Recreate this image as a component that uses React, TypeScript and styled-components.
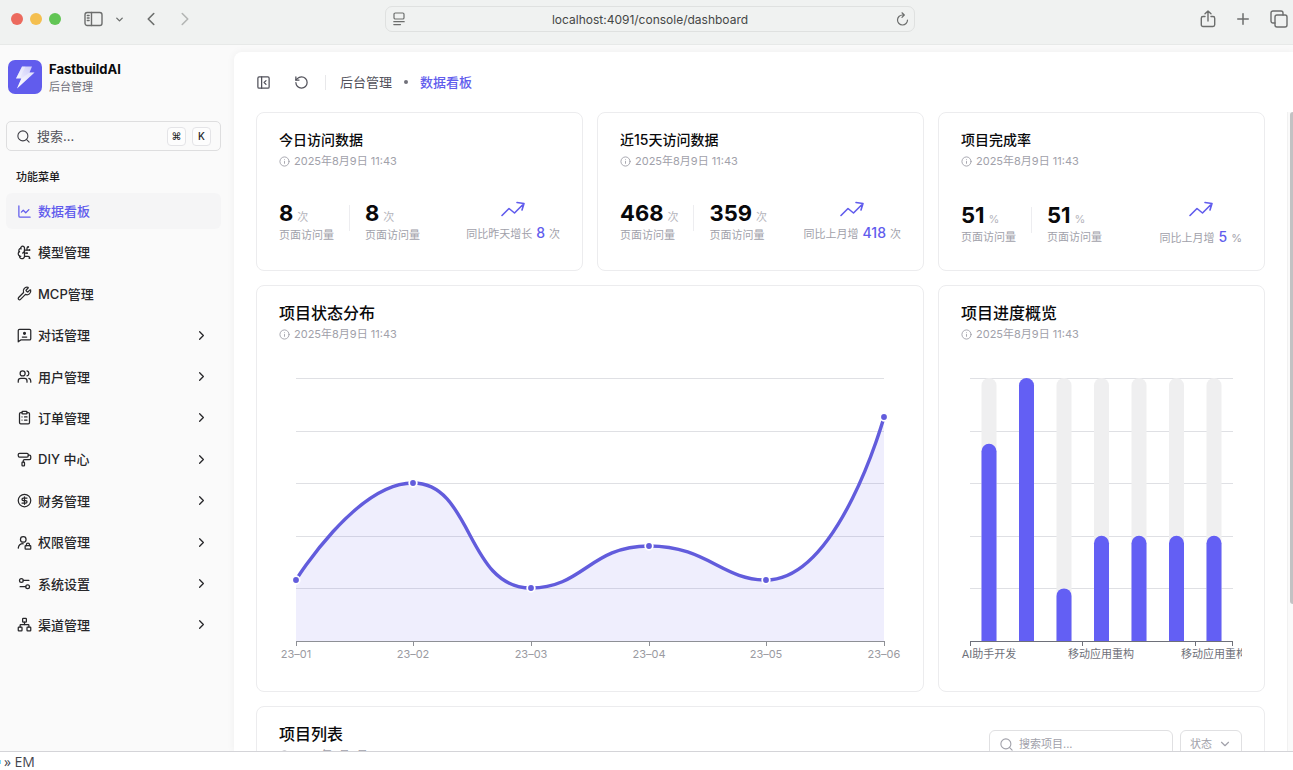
import React from "react";
import styled, { createGlobalStyle } from "styled-components";
import {
  BrainCircuit,
  ChartLine,
  ChevronDown,
  ChevronLeft,
  ChevronRight,
  CircleDollarSign,
  ClipboardList,
  Info,
  Network,
  PaintRoller,
  PanelLeftClose,
  Plus,
  RotateCcw,
  Search,
  Settings2,
  Users,
  Wrench,
} from "lucide-react";

const accent = "#615ced";
const border = "#ececee";

const GlobalStyle = createGlobalStyle`
  * { box-sizing: border-box; }
  body {
    margin: 0;
    background: #fff;
    color: #18181b;
    font-family: Inter, "Noto Sans CJK SC", sans-serif;
  }
  h1, h2, h3, p, ul, dl, dd { margin: 0; padding: 0; }
  ul { list-style: none; }
  button, input, select { font: inherit; color: inherit; }
  a { color: inherit; text-decoration: none; }
  svg { display: block; flex-shrink: 0; }
`;

const Screen = styled.div`
  display: flex;
  flex-direction: column;
  height: 100vh;
  overflow: hidden;
`;

/* ---------- browser bar ---------- */

const BrowserBar = styled.header`
  display: flex;
  align-items: center;
  flex-shrink: 0;
  height: 45px;
  padding: 0 5px 6px 11px;
  background: #f0f2f1;
  border-bottom: 1px solid #e7e9e8;
  color: #6c6e6d;
`;

const BarSide = styled.div<{ $end?: boolean }>`
  display: flex;
  flex: 1;
  align-items: center;
  justify-content: ${(p) => (p.$end ? "flex-end" : "flex-start")};
  gap: ${(p) => (p.$end ? "18px" : "11px")};
`;

const Lights = styled.div`
  display: flex;
  gap: 7px;
  margin-right: 12px;
`;

const Light = styled.span<{ $color: string }>`
  width: 12px;
  height: 12px;
  border-radius: 50%;
  background: ${(p) => p.$color};
`;

const IconButton = styled.button<{ $faded?: boolean }>`
  display: inline-flex;
  padding: 0;
  border: 0;
  background: none;
  color: ${(p) => (p.$faded ? "#b4b6b5" : "inherit")};
`;

const NavButtons = styled.div`
  display: flex;
  gap: 12px;
  margin-left: 4px;
`;

const Address = styled.div`
  display: flex;
  align-items: center;
  width: 530px;
  max-width: 50%;
  height: 26px;
  padding: 0 5px 0 7px;
  border: 1px solid #dfe1e0;
  border-radius: 7px;
`;

const AddressInput = styled.input`
  flex: 1;
  min-width: 0;
  border: 0;
  padding: 0;
  background: none;
  color: #454746;
  font-size: 12px;
  text-align: center;
  outline: none;
`;

/* ---------- shell ---------- */

const Shell = styled.div`
  display: flex;
  flex: 1;
  min-height: 0;
  background: #fafafa;
`;

const Sidebar = styled.aside`
  width: 234px;
  flex-shrink: 0;
  padding: 15px 13px 0 6px;
`;

const Brand = styled.div`
  display: flex;
  gap: 7px;
  padding-left: 2px;
`;

const BrandName = styled.h1`
  font-size: 13px;
  line-height: 18px;
  font-weight: 700;
  color: #09090b;
`;

const BrandSub = styled.p`
  font-size: 11px;
  line-height: 18px;
  color: #71717a;
`;

const SearchBox = styled.label`
  display: flex;
  align-items: center;
  gap: 6px;
  height: 30px;
  margin-top: 25px;
  padding: 0 9px;
  border: 1px solid #dededf;
  border-radius: 5px;
  color: #3f3f46;
`;

const SearchInput = styled.input`
  flex: 1;
  min-width: 0;
  border: 0;
  padding: 0;
  background: none;
  font-size: 13px;
  outline: none;
  &::placeholder { color: #52525b; opacity: 1; }
`;

const Kbd = styled.kbd`
  display: grid;
  place-items: center;
  width: 19px;
  height: 19px;
  border: 1px solid #e4e4e7;
  border-radius: 4px;
  background: #fdfdfd;
  color: #27272a;
  font-family: inherit;
  font-size: 10px;
  font-weight: 500;
`;

const MenuTitle = styled.h2`
  margin: 18px 0 8px;
  padding-left: 10px;
  font-size: 11px;
  line-height: 16px;
  font-weight: 500;
`;

const Menu = styled.ul`
  display: flex;
  flex-direction: column;
  justify-content: space-between;
  height: 450px;
`;

const MenuLink = styled.a<{ $active?: boolean }>`
  display: flex;
  align-items: center;
  gap: 6px;
  height: 36px;
  padding: 0 12px 0 11px;
  border-radius: 6px;
  background: ${(p) => (p.$active ? "#f5f5f6" : "transparent")};
  color: ${(p) => (p.$active ? accent : "#27272a")};
  font-size: 13px;
  line-height: 18px;
  font-weight: 500;
  & > span { flex: 1; }
`;

/* ---------- main panel ---------- */

const Main = styled.main`
  display: flex;
  flex-direction: column;
  flex: 1;
  min-width: 0;
  margin-top: 7px;
  border-radius: 8px 0 0 0;
  background: #fff;
  box-shadow: 0 0 8px rgba(0, 0, 0, 0.05);
`;

const TopBar = styled.div`
  display: flex;
  align-items: center;
  height: 60px;
  flex-shrink: 0;
  padding-left: 22px;
  color: #52525b;
`;

const TopTools = styled.div`
  display: flex;
  gap: 23px;
  padding-right: 16px;
  margin-right: 14px;
  border-right: 1px solid #e8e8ea;
`;

const Crumbs = styled.nav`
  display: flex;
  align-items: center;
  gap: 12px;
  font-size: 13px;
  line-height: 18px;
`;

const CrumbDot = styled.span`
  width: 4px;
  height: 4px;
  border-radius: 50%;
  background: #71717a;
`;

const CrumbCurrent = styled.a`
  color: ${accent};
  font-weight: 500;
`;

const Body = styled.div`
  display: flex;
  flex: 1;
  min-height: 0;
`;

const Cards = styled.div`
  display: grid;
  flex: 1;
  min-width: 0;
  grid-template-columns: repeat(3, minmax(0, 1fr));
  align-content: start;
  gap: 14px;
  padding: 0 22px;
  overflow: hidden;
`;

const ScrollTrack = styled.div`
  display: flex;
  flex-direction: column;
  align-items: flex-end;
  width: 6px;
  border-left: 1px solid #f1f1f1;
  background: #fafafa;
`;

const ScrollThumb = styled.div`
  width: 3px;
  height: 77%;
  border-radius: 3px 0 0 3px;
  background: #c2c2c3;
`;

const Card = styled.section<{ $span?: number }>`
  grid-column: span ${(p) => p.$span || 1};
  min-width: 0;
  padding: 17px 22px 22px;
  border: 1px solid ${border};
  border-radius: 8px;
  background: #fff;
`;

const ChartPanel = styled(Card)`
  padding: 15px 22px 23px;
`;

const StatTitle = styled.h3`
  margin-bottom: 3px;
  font-size: 14px;
  line-height: 20px;
  font-weight: 500;
  color: #09090b;
`;

const SectionTitle = styled.h3`
  margin-bottom: 1px;
  font-size: 16px;
  line-height: 24px;
  font-weight: 500;
  color: #09090b;
`;

const DateLine = styled.p`
  display: flex;
  align-items: center;
  gap: 4px;
  font-size: 11px;
  line-height: 16px;
  color: #a1a1aa;
`;

const StatRow = styled.div`
  display: flex;
  justify-content: space-between;
  margin-top: 31px;
`;

const StatGroup = styled.dl<{ $low?: boolean }>`
  display: flex;
  padding-top: ${(p) => (p.$low ? "2px" : "0")};
`;

const Stat = styled.div`
  display: flex;
  flex-direction: column-reverse;
  justify-content: flex-end;
`;

const StatDivider = styled.span`
  width: 1px;
  height: 26px;
  margin: 5px 15px 0;
  background: #ededf0;
`;

const StatLabel = styled.dt`
  font-size: 11px;
  line-height: 18px;
  color: #a1a1aa;
`;

const StatValue = styled.dd`
  font-size: 22px;
  line-height: 26px;
  font-weight: 700;
  color: #09090b;
`;

const Unit = styled.small`
  margin-left: 4px;
  font-size: 11px;
  line-height: 1;
  font-weight: 400;
  color: #b4b4bb;
`;

const Trend = styled.div<{ $low?: boolean }>`
  display: flex;
  flex-direction: column;
  align-items: center;
  gap: ${(p) => (p.$low ? "10px" : "6px")};
  color: ${accent};
`;

const TrendText = styled.p`
  font-size: 11px;
  line-height: 20px;
  color: #a1a1aa;
`;

const TrendValue = styled.strong`
  margin: 0 4px;
  font-size: 14px;
  line-height: 1;
  font-weight: 500;
  color: ${accent};
`;

const Chart = styled.svg`
  width: 100%;
  height: auto;
  overflow: hidden;
  font-size: 11px;
`;

const ListHead = styled.div`
  display: flex;
  justify-content: space-between;
`;

const Filters = styled.div`
  display: flex;
  gap: 7px;
  padding-top: 8px;
  color: #a1a1aa;
`;

const FilterBox = styled.label<{ $wide?: boolean }>`
  display: flex;
  align-items: center;
  gap: 5px;
  width: ${(p) => (p.$wide ? "184px" : "62px")};
  height: 28px;
  padding: 0 9px;
  border: 1px solid #e0e0e2;
  border-radius: 6px;
`;

const FilterInput = styled.input`
  width: 100%;
  border: 0;
  padding: 0;
  background: none;
  font-size: 11px;
  outline: none;
  &::placeholder { color: #a1a1aa; opacity: 1; }
`;

const FilterSelect = styled.select`
  flex: 1;
  min-width: 0;
  appearance: none;
  border: 0;
  padding: 0;
  background: none;
  font-size: 11px;
  outline: none;
`;

const StatusStrip = styled.footer`
  display: flex;
  align-items: center;
  flex-shrink: 0;
  height: 19px;
  padding-top: 2px;
  border-top: 1px solid #d4d4d8;
  background: #fff;
  color: #45454d;
  font-family: "Open Sans", "Noto Sans", sans-serif;
  font-size: 14px;
  line-height: 16px;
  &::before {
    content: "";
    width: 1px;
    height: 4px;
    margin-right: 3px;
    background: #7fdcff;
  }
`;

/* ---------- drawings ---------- */

const stroke = {
  fill: "none",
  stroke: "currentColor",
  strokeLinecap: "round" as const,
  strokeLinejoin: "round" as const,
};

const Logo = () => (
  <svg width="34" height="34" viewBox="0 0 34 34" aria-hidden="true">
    <defs>
      <linearGradient id="bolt" x1="0" y1="1" x2="1" y2="0">
        <stop offset="0" stopColor="#fff" />
        <stop offset="1" stopColor="#fff" stopOpacity="0.65" />
      </linearGradient>
    </defs>
    <rect width="34" height="34" rx="7" fill="#615ced" />
    <path d="M14 6.5h10l-2.5 6h5L9 28.5l4.300-10H8z" fill="url(#bolt)" />
    <path d="M14 6.500h3.500L12.500 17l-4.500 1.500z" fill="#fff" opacity="0.3" />
    <path d="M21.500 12.500h5L9 28.500l4.300-10z" fill="#fff" opacity="0.350" />
  </svg>
);

const SidebarIcon = () => (
  <svg width="19" height="16" viewBox="0 0 19 16" {...stroke} strokeWidth="1.4" aria-hidden="true">
    <rect x="1" y="1.500" width="17" height="13" rx="2.200" />
    <path d="M7.500 1.500v13M3.300 4.500h1.800M3.300 7h1.800M3.300 9.500h1.800" />
  </svg>
);

const ReaderIcon = () => (
  <svg width="12" height="14" viewBox="0 0 12 14" {...stroke} strokeWidth="1.200" aria-hidden="true">
    <rect x="1" y="1" width="10" height="6" rx="1.300" />
    <path d="M0.800 9.700h10.400M0.800 12.600h6.700" />
  </svg>
);

const ReloadIcon = () => (
  <svg width="13" height="14" viewBox="0 0 13 14" {...stroke} strokeWidth="1.200" aria-hidden="true">
    <path d="M11.500 8a5 5 0 1 1-5-5h1.500M6 0.800 8.300 3 6 5.300" />
  </svg>
);

const ShareIcon = () => (
  <svg width="16" height="18" viewBox="0 0 16 18" {...stroke} strokeWidth="1.400" aria-hidden="true">
    <path d="M5 6.500H3A1.700 1.700 0 0 0 1.300 8.200v6.600A1.700 1.700 0 0 0 3 16.500h10a1.700 1.700 0 0 0 1.700-1.700V8.200A1.700 1.700 0 0 0 13 6.500h-2M8 11V1M5 3.800 8 1l3 2.800" />
  </svg>
);

const TabsIcon = () => (
  <svg width="18" height="18" viewBox="0 0 18 18" {...stroke} strokeWidth="1.400" aria-hidden="true">
    <rect x="5" y="5" width="12" height="12" rx="2" />
    <path d="M5 13H3a2 2 0 0 1-2-2V3a2 2 0 0 1 2-2h8a2 2 0 0 1 2 2v2" />
  </svg>
);

const ChatUserIcon = ({ size = 14 }: { size?: number }) => (
  <svg width={size} height={size} viewBox="0 0 24 24" {...stroke} strokeWidth="2" aria-hidden="true">
    <path d="M22 17a2 2 0 0 1-2 2H6l-4 3V4a2 2 0 0 1 2-2h16a2 2 0 0 1 2 2z" />
    <circle cx="12" cy="8.500" r="1.500" fill="currentColor" />
    <path d="M8.500 14.500h7" />
  </svg>
);

const UserLockIcon = ({ size = 14 }: { size?: number }) => (
  <svg width={size} height={size} viewBox="0 0 24 24" {...stroke} strokeWidth="2" aria-hidden="true">
    <circle cx="10" cy="7" r="4.500" />
    <path d="M2 21a8 8 0 0 1 8-7" />
    <rect x="13" y="17" width="9" height="5.500" rx="1" />
    <path d="M15 17v-1.500a2.500 2.500 0 0 1 5 0V17" />
  </svg>
);

const TrendIcon = () => (
  <svg width="24" height="18" viewBox="0 0 24 18" {...stroke} strokeWidth="1.600" aria-hidden="true">
    <path d="M1 15.500 8 8.500l5.500 4.500L22.500 4M16 2.500l7 1-2 6.500" />
  </svg>
);

/* ---------- data ---------- */

const menu = [
  { label: "数据看板", icon: ChartLine, active: true },
  { label: "模型管理", icon: BrainCircuit },
  { label: "MCP管理", icon: Wrench },
  { label: "对话管理", icon: ChatUserIcon, nested: true },
  { label: "用户管理", icon: Users, nested: true },
  { label: "订单管理", icon: ClipboardList, nested: true },
  { label: "DIY 中心", icon: PaintRoller, nested: true },
  { label: "财务管理", icon: CircleDollarSign, nested: true },
  { label: "权限管理", icon: UserLockIcon, nested: true },
  { label: "系统设置", icon: Settings2, nested: true },
  { label: "渠道管理", icon: Network, nested: true },
];

const stats = [
  { title: "今日访问数据", values: ["8", "8"], unit: "次", trend: "同比昨天增长", delta: "8" },
  { title: "近15天访问数据", values: ["468", "359"], unit: "次", trend: "同比上月增", delta: "418" },
  { title: "项目完成率", values: ["51", "51"], unit: "%", trend: "同比上月增", delta: "5", low: true },
];

const gridRows = [36, 89, 141, 194, 246];

const linePoints = [
  { x: 17, y: 238, label: "23–01" },
  { x: 134, y: 141, label: "23–02" },
  { x: 252, y: 246, label: "23–03" },
  { x: 370, y: 204, label: "23–04" },
  { x: 487, y: 238, label: "23–05" },
  { x: 605, y: 75, label: "23–06" },
];

const curve =
  "M17 238C17 238 77 141 134 141C194 141 187 246 252 246C304 246 311 204 370 204C428 204 443 238 487 238C560 238 605 75 605 75";

const bars = [75, 100, 20, 40, 40, 40, 40];

const DateStamp = () => (
  <DateLine>
    <Info size={11} strokeWidth={2} aria-hidden="true" />
    2025年8月9日 11:43
  </DateLine>
);

const LineChart = () => (
  <Chart viewBox="0 0 622 326" role="img" aria-label="项目状态分布">
    <g stroke="#dfe0e4">
      {gridRows.map((y) => (
        <path key={y} d={`M17 ${y}.5H605`} />
      ))}
    </g>
    <path d={`${curve}V299H17Z`} fill={accent} fillOpacity="0.1" />
    <path d={curve} fill="none" stroke="#625cdc" strokeWidth="3.400" />
    <path d="M17 299.500H605" stroke="#8e9096" />
    {linePoints.map((p) => (
      <g key={p.label}>
        <path d={`M${p.x}.5 299v5`} stroke="#8e9096" />
        <circle cx={p.x} cy={p.y} r="3.800" fill="#625cdc" stroke="#fff" strokeWidth="1.800" />
        <text x={p.x} y="316" textAnchor="middle" fill="#9a9aa1">
          {p.label}
        </text>
      </g>
    ))}
  </Chart>
);

const BarChart = () => (
  <Chart viewBox="0 0 281 326" role="img" aria-label="项目进度概览">
    <g stroke="#dfe0e4">
      {gridRows.map((y) => (
        <path key={y} d={`M9 ${y}.5H272`} />
      ))}
    </g>
    {bars.map((value, i) => {
      const x = 20.5 + i * 37.5;
      const h = 263 * (value / 100);
      const top = 299 - h;
      return (
        <g key={i}>
          <path d={`M${x} 299V43.500a7.500 7.500 0 0 1 15 0V299z`} fill="#efeff0" />
          <path d={`M${x} 299V${top + 7.5}a7.500 7.500 0 0 1 15 0V299z`} fill="#635ff4" />
        </g>
      );
    })}
    <path d="M9 299.500H272M9.500 299v5M121.500 299v5M234.500 299v5M271.500 299v5" fill="none" stroke="#6e7079" />
    <g fill="#6e7079" textAnchor="middle">
      <text x="28" y="316">AI助手开发</text>
      <text x="140" y="316">移动应用重构</text>
      <text x="253" y="316">移动应用重构</text>
    </g>
  </Chart>
);

export default function App() {
  return (
    <Screen>
      <GlobalStyle />
      <BrowserBar>
        <BarSide>
          <Lights>
            <Light $color="#ec6a5e" />
            <Light $color="#f4bf4f" />
            <Light $color="#61c554" />
          </Lights>
          <IconButton aria-label="边栏"><SidebarIcon /></IconButton>
          <IconButton aria-label="标签页组"><ChevronDown size={11} strokeWidth={3} /></IconButton>
          <NavButtons>
            <IconButton aria-label="后退"><ChevronLeft size={22} strokeWidth={1.75} /></IconButton>
            <IconButton aria-label="前进" $faded><ChevronRight size={22} strokeWidth={1.75} /></IconButton>
          </NavButtons>
        </BarSide>
        <Address>
          <ReaderIcon />
          <AddressInput aria-label="地址" defaultValue="localhost:4091/console/dashboard" />
          <IconButton aria-label="重新载入"><ReloadIcon /></IconButton>
        </Address>
        <BarSide $end>
          <IconButton aria-label="共享"><ShareIcon /></IconButton>
          <IconButton aria-label="新标签页"><Plus size={18} strokeWidth={2} /></IconButton>
          <IconButton aria-label="标签页概览"><TabsIcon /></IconButton>
        </BarSide>
      </BrowserBar>

      <Shell>
        <Sidebar>
          <Brand>
            <Logo />
            <div>
              <BrandName>FastbuildAI</BrandName>
              <BrandSub>后台管理</BrandSub>
            </div>
          </Brand>
          <SearchBox>
            <Search size={15} strokeWidth={1.75} aria-hidden="true" />
            <SearchInput aria-label="搜索" placeholder="搜索..." />
            <Kbd>⌘</Kbd>
            <Kbd>K</Kbd>
          </SearchBox>
          <MenuTitle>功能菜单</MenuTitle>
          <nav>
            <Menu>
              {menu.map(({ label, icon: Icon, active, nested }) => (
                <li key={label}>
                  <MenuLink href="#" $active={active}>
                    <Icon size={15} />
                    <span>{label}</span>
                    {nested && <ChevronRight size={15} />}
                  </MenuLink>
                </li>
              ))}
            </Menu>
          </nav>
        </Sidebar>

        <Main>
          <TopBar>
            <TopTools>
              <IconButton aria-label="收起菜单"><PanelLeftClose size={15} /></IconButton>
              <IconButton aria-label="刷新"><RotateCcw size={15} /></IconButton>
            </TopTools>
            <Crumbs aria-label="面包屑">
              <a href="#">后台管理</a>
              <CrumbDot />
              <CrumbCurrent href="#" aria-current="page">数据看板</CrumbCurrent>
            </Crumbs>
          </TopBar>
          <Body>
            <Cards>
              {stats.map((s) => (
                <Card key={s.title}>
                  <StatTitle>{s.title}</StatTitle>
                  <DateStamp />
                  <StatRow>
                    <StatGroup $low={s.low}>
                      {s.values.map((v, i) => (
                        <React.Fragment key={i}>
                          {i > 0 && <StatDivider />}
                          <Stat>
                            <StatLabel>页面访问量</StatLabel>
                            <StatValue>{v}<Unit>{s.unit}</Unit></StatValue>
                          </Stat>
                        </React.Fragment>
                      ))}
                    </StatGroup>
                    <Trend $low={s.low}>
                      <TrendIcon />
                      <TrendText>
                        {s.trend}<TrendValue>{s.delta}</TrendValue>{s.unit}
                      </TrendText>
                    </Trend>
                  </StatRow>
                </Card>
              ))}
              <ChartPanel $span={2}>
                <SectionTitle>项目状态分布</SectionTitle>
                <DateStamp />
                <LineChart />
              </ChartPanel>
              <ChartPanel>
                <SectionTitle>项目进度概览</SectionTitle>
                <DateStamp />
                <BarChart />
              </ChartPanel>
              <ChartPanel $span={3}>
                <ListHead>
                  <div>
                    <SectionTitle>项目列表</SectionTitle>
                    <DateStamp />
                  </div>
                  <Filters>
                    <FilterBox $wide>
                      <Search size={15} strokeWidth={1.75} aria-hidden="true" />
                      <FilterInput aria-label="搜索项目" placeholder="搜索项目..." />
                    </FilterBox>
                    <FilterBox>
                      <FilterSelect aria-label="状态">
                        <option>状态</option>
                      </FilterSelect>
                      <ChevronDown size={14} aria-hidden="true" />
                    </FilterBox>
                  </Filters>
                </ListHead>
              </ChartPanel>
            </Cards>
            <ScrollTrack aria-hidden="true">
              <ScrollThumb />
            </ScrollTrack>
          </Body>
        </Main>
      </Shell>

      <StatusStrip>» EM</StatusStrip>
    </Screen>
  );
}
